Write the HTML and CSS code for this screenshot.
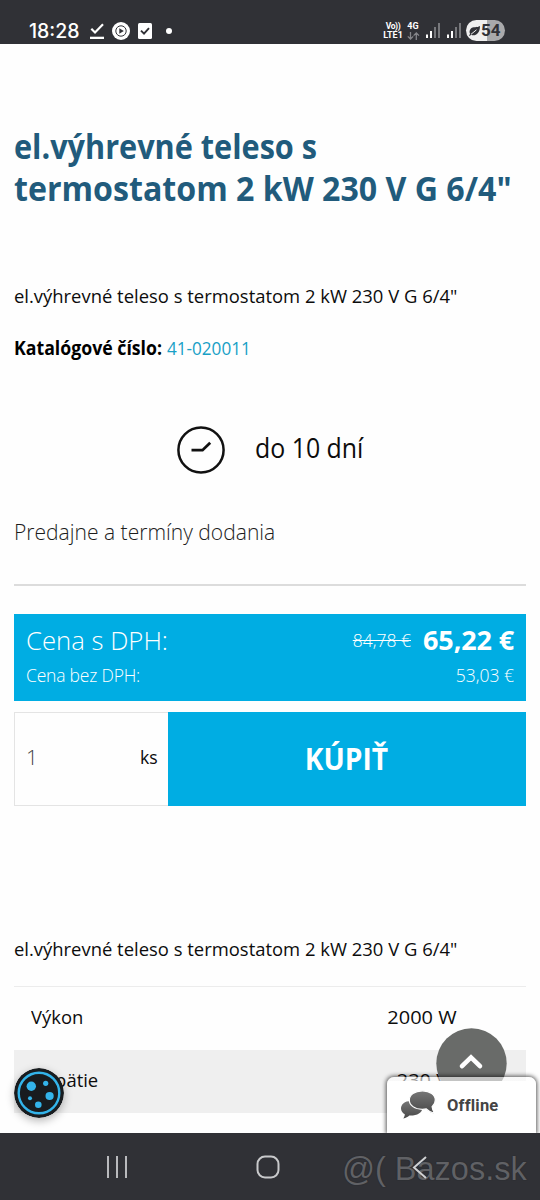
FILE: index.html
```
<!DOCTYPE html>
<html lang="sk">
<head>
<meta charset="utf-8">
<title>el.výhrevné teleso s termostatom</title>
<link rel="stylesheet" href="styles.css">
</head>
<body>
<div class="phone">
  <header class="status">
    <div class="status-left">
      <span class="clock">18:28</span>
      <svg class="ic-check" width="14" height="18" viewBox="0 0 14 18"><path d="M1.3 6.8 5 10.500 13 2.200" fill="none" stroke="#fff" stroke-width="2.200"/><path d="M0 14.700h14v2.300H0z" fill="#fff"/></svg>
      <svg class="ic-play" width="18" height="18" viewBox="0 0 18 18"><circle cx="9" cy="9" r="9" fill="#fff"/><circle cx="9" cy="9" r="5.200" fill="none" stroke="#303136" stroke-width="1"/><path d="M7.300 6.300v5.400L11.800 9z" fill="#303136"/></svg>
      <svg class="ic-box" width="14" height="16" viewBox="0 0 14 16"><rect width="14" height="16" rx="1.500" fill="#fff"/><path d="m3 7.600 3 3 5-5.400" fill="none" stroke="#303136" stroke-width="1.900"/></svg>
      <i class="dot"></i>
    </div>
    <div class="status-right">
      <div class="volte"><span>Vo))</span><span>LTE1</span></div>
      <div class="net"><span>4G</span>
        <svg width="13" height="8" viewBox="0 0 13 8"><path d="M3.500 0v7M.8 4.400 3.500 7l2.700-2.600M9.300 8V1M6.600 3.600 9.300 1 12 3.600" fill="none" stroke="#85868a" stroke-width="1.300"/></svg></div>
      <svg class="bars" width="14" height="15" viewBox="0 0 14 15"><path d="M0 11.500h2V15H0z M4 8h2v7H4z" fill="#fff"/><path d="M8 4h2v11H8z M12 0h2v15h-2z" fill="#77787c"/></svg>
      <svg class="bars second" width="14" height="15" viewBox="0 0 14 15"><path d="M0 11.500h2V15H0z M4 8h2v7H4z" fill="#fff"/><path d="M8 4h2v11H8z M12 0h2v15h-2z" fill="#77787c"/></svg>
      <div class="battery">
        <svg width="11" height="10" viewBox="0 0 11 10"><path d="M11 0C8 2 4 0 1.500 3 0 5 .5 7 1.200 8L0 9.300l.8.7 1.300-1.200C6 10.500 11 8 11 0Z" fill="#303136"/><path d="M2 8.300 7.500 3.800" stroke="#eee" stroke-width="1"/></svg>
        <span>54</span>
      </div>
    </div>
  </header>

  <main class="page">
    <h1 class="title"><span class="fit t1">el.výhrevné teleso s</span><span class="fit t2">termostatom 2 kW 230 V G 6/4"</span></h1>
    <p class="desc"><span class="fit d1">el.výhrevné teleso s termostatom 2 kW 230 V G 6/4"</span></p>
    <p class="catalog"><b class="fit c1">Katalógové číslo:</b><a class="fit c2">41-020011</a></p>
    <div class="delivery">
      <svg width="50" height="50" viewBox="0 0 50 50" fill="none" stroke="#111"><circle cx="25" cy="25" r="22.600" stroke-width="2.500"/><path d="M15.500 25.200h11l7.700-7.400" stroke-width="2.800"/></svg>
      <span class="fit dl">do 10 dní</span>
    </div>
    <p class="stores"><span class="fit st">Predajne a termíny dodania</span></p>
    <hr class="rule">
    <section class="price">
      <div class="price-row main"><span class="fit p1">Cena s DPH:</span><span class="amount"><s class="old">84,78 €</s><b class="now">65,22 €</b></span></div>
      <div class="price-row net-price"><span>Cena bez DPH:</span><span class="net-amount">53,03 €</span></div>
    </section>
    <div class="buy">
      <div class="qty"><span class="num">1</span><span class="fit unit">ks</span></div>
      <div class="button"><span class="fit cta">KÚPIŤ</span></div>
    </div>
    <p class="desc second-desc"><span class="fit d1">el.výhrevné teleso s termostatom 2 kW 230 V G 6/4"</span></p>
    <div class="table">
      <div class="row"><span class="label"><span class="fit lb">Výkon</span></span><span class="value"><span class="fit vl">2000 W</span></span></div>
      <div class="row shade"><span class="label"><span class="fit lb">Napätie</span></span><span class="value"><span class="fit vl">230 V</span></span></div>
    </div>
  </main>

  <svg class="cookie" width="50" height="50" viewBox="0 0 50 50"><circle cx="25" cy="25" r="25" fill="#181c1f"/><circle cx="25" cy="25" r="20.300" fill="none" stroke="#33b4ea" stroke-width="2.400"/><g fill="#33b4ea"><circle cx="17.300" cy="18.200" r="4.700"/><circle cx="31.700" cy="15.300" r="2.600"/><circle cx="35.600" cy="28" r="4.100"/><circle cx="24.300" cy="36.800" r="3.300"/><circle cx="16" cy="30.300" r="2"/></g></svg>
  <svg class="totop" width="71" height="71" viewBox="0 0 71 71"><circle cx="35.500" cy="35.500" r="35.200" fill="#696b69"/><path d="m26 38.200 9-8.800 9 8.800" fill="none" stroke="#fff" stroke-width="4.600" stroke-linecap="round"/></svg>
  <div class="chat">
    <svg width="36" height="30" viewBox="0 0 36 30"><defs><linearGradient id="g" x1="0" y1="0" x2="0" y2="1"><stop offset="0" stop-color="#777"/><stop offset="1" stop-color="#484848"/></linearGradient></defs><path d="M11 11C4.500 11 1 14.500 1 18.500c0 2.500 1.500 4.500 3.800 5.800-.1 1.800-.6 2.900-1.500 4.100 2.500-.4 4.700-1.400 6-2.900C17 25.800 22 23 22.500 18Z" fill="url(#g)"/><path d="M22.500.8C14.500.8 9.300 4.800 9.300 10c0 5.300 5.400 9.300 13 9.300 1.500 0 2.700-.1 4-.4 2.200 2.300 5 3.900 8.600 4.700-1.700-2.300-2.600-4.200-2.800-7 2-1.700 3.200-4 3.200-6.600C35.300 4.800 30 .8 22.500.8Z" fill="url(#g)" stroke="#fff" stroke-width="1.200"/></svg>
    <span>Offline</span>
  </div>

  <footer class="nav">
    <svg class="recents" width="20" height="22" viewBox="0 0 20 22"><path d="M1 0v22M10 0v22M19 0v22" stroke="#b9babd" stroke-width="2"/></svg>
    <svg class="home" width="24" height="24" viewBox="0 0 24 24"><rect x="1.500" y="1.500" width="21" height="21" rx="7.500" fill="none" stroke="#c8c9cb" stroke-width="2"/></svg>
    <span class="mark">@( Bazos.sk</span>
    <svg class="back" width="15" height="23" viewBox="0 0 15 23"><path d="M14 1 2 11.500 14 22" fill="none" stroke="#d0d1d3" stroke-width="2"/></svg>
  </footer>
</div>
</body>
</html>
```
FILE: styles.css
```
* { box-sizing: border-box; margin: 0; padding: 0; }
body { background: #fefefe; font-family: "Open Sans", "Noto Sans", sans-serif; color: #0c0c0c; }
.phone { position: relative; width: 540px; height: 1200px; display: flex; flex-direction: column; overflow: hidden; }
.fit { display: inline-block; transform-origin: left center; white-space: pre; }

.status { height: 44px; flex: none; background: #303136; display: flex; justify-content: space-between; padding: 0 35px 0 29px; color: #fff; }
.status-left, .status-right { display: flex; align-items: center; padding-top: 17px; }
.clock { font: 500 19.500px/26px Inter, sans-serif; width: 61px; }
.ic-play { margin-left: 8px; }
.ic-box { margin-left: 8px; }
.dot { width: 6px; height: 6px; border-radius: 50%; background: #fff; margin-left: 14px; }
.volte, .net { display: flex; flex-direction: column; align-items: center; font: 700 9px/9px Roboto, sans-serif; }
.volte { width: 20px; white-space: nowrap; }
.volte span:first-child { font-size: 8.500px; letter-spacing: -.4px; }
.net { width: 14px; margin-left: 3px; }
.net svg { margin-top: 1px; }
.bars { margin-left: 6px; }
.bars.second { margin-left: 7px; }
.battery { width: 39px; height: 21px; margin-left: 5px; border-radius: 11px; background: linear-gradient(90deg, #efefef 0 55%, #a9a9ab 55%); display: flex; align-items: center; padding-left: 3px; color: #303136; font: 700 17px/21px Roboto, sans-serif; }
.battery span { margin-left: 1px; }

.page { flex: none; height: 1089px; padding: 81px 14px 0; display: flex; flex-direction: column; overflow: hidden; }
.page > * { flex: none; }
.title { font-size: 34px; line-height: 42px; font-weight: 700; color: #215b7c; display: flex; flex-direction: column; align-items: flex-start; }
.t1 { transform: scaleX(.901); }
.t2 { transform: scaleX(.945); }
.desc { margin-top: 74px; font-size: 19px; line-height: 26px; }
.d1 { transform: scaleX(.97); }
.catalog { margin-top: 26px; font-size: 19px; line-height: 26px; display: flex; gap: 5px; }
.c1 { transform: scaleX(.932); width: 148px; color: #000; }
.c2 { transform: scaleX(.9); color: #18a0c6; }
.delivery { margin: 64px 0 0 162px; display: flex; gap: 29px; align-items: center; height: 50px; font-size: 27px; line-height: 44px; }
.dl { transform: scaleX(.922); padding-bottom: 4px; }
.stores { margin-top: 41px; font-size: 22px; line-height: 30px; font-weight: 300; color: #1c1c1c; }
.st { transform: scaleX(.957); }
.rule { margin-top: 38px; border: 0; height: 2px; background: #dcdcdc; }
.price { margin-top: 28px; height: 87px; background: #00ade3; color: #fff; padding: 8px 12px 0; }
.price-row { display: flex; justify-content: space-between; align-items: center; font-weight: 350; }
.main { font-size: 26.500px; line-height: 36px; }
.p1 { transform: scaleX(.97); }
.amount { display: flex; gap: 12px; }
.old { font-size: 17.500px; }
.now { font-size: 27px; width: 91px; letter-spacing: -.1px; white-space: nowrap; font-weight: 700; }
.net-price { margin-top: 4px; font-size: 17.500px; line-height: 26px; letter-spacing: -.2px; }
.net-amount { letter-spacing: 0; }
.buy { margin-top: 11px; display: flex; height: 94px; }
.qty { width: 153.500px; border: 1px solid #e4e4e4; border-right: 0; display: flex; justify-content: space-between; align-items: center; padding: 0 8px 4px 11px; font-size: 19px; }
.num { font-weight: 350; color: #444; font-size: 21px; }
.unit { transform: scaleX(.93); }
.button { flex: 1; background: #00ade3; color: #fff; display: flex; align-items: center; justify-content: center; font-size: 30px; font-weight: 700; padding-bottom: 2px; }
.cta { transform: scaleX(.94); transform-origin: center; }
.second-desc { margin-top: 130px; }
.table { margin-top: 24px; border-top: 1px solid #ececec; font-size: 19px; }
.row { display: flex; height: 63px; align-items: center; padding-bottom: 4px; }
.shade { background: #efefef; padding-bottom: 3px; }
.label { width: 304px; padding-left: 17px; }
.lb { transform: scaleX(.97); }
.value { flex: 1; text-align: center; }
.vl { transform: scaleX(1.05); transform-origin: center; }

.cookie { position: absolute; left: 14px; top: 1068px; border-radius: 50%; box-shadow: 0 3px 9px rgba(0, 0, 0, .28); }
.totop { position: absolute; left: 436px; top: 1028px; }
.chat { position: absolute; left: 387px; top: 1077px; width: 149px; height: 56px; border-radius: 7px 7px 0 0; background: linear-gradient(rgba(255, 255, 255, .6) 0 4px, #fff 4px); box-shadow: 0 0 4px 1px rgba(0, 0, 0, .65); display: flex; align-items: center; gap: 11px; padding: 0 0 0 13px; font: 700 16.500px/20px Roboto, sans-serif; color: #444; }
.chat span { letter-spacing: .2px; padding-top: 1px; }

.nav { position: relative; height: 67px; flex: none; background: #303136; }
.recents { position: absolute; left: 107px; top: 23px; }
.home { position: absolute; left: 256px; top: 22px; }
.back { position: absolute; left: 412px; top: 23px; }
.mark { position: absolute; left: 342px; top: 17px; font: 32.500px/38px "Liberation Sans", Arial, sans-serif; color: #606165; white-space: pre; text-shadow: 0 0 1px #1d1e22; }
```
